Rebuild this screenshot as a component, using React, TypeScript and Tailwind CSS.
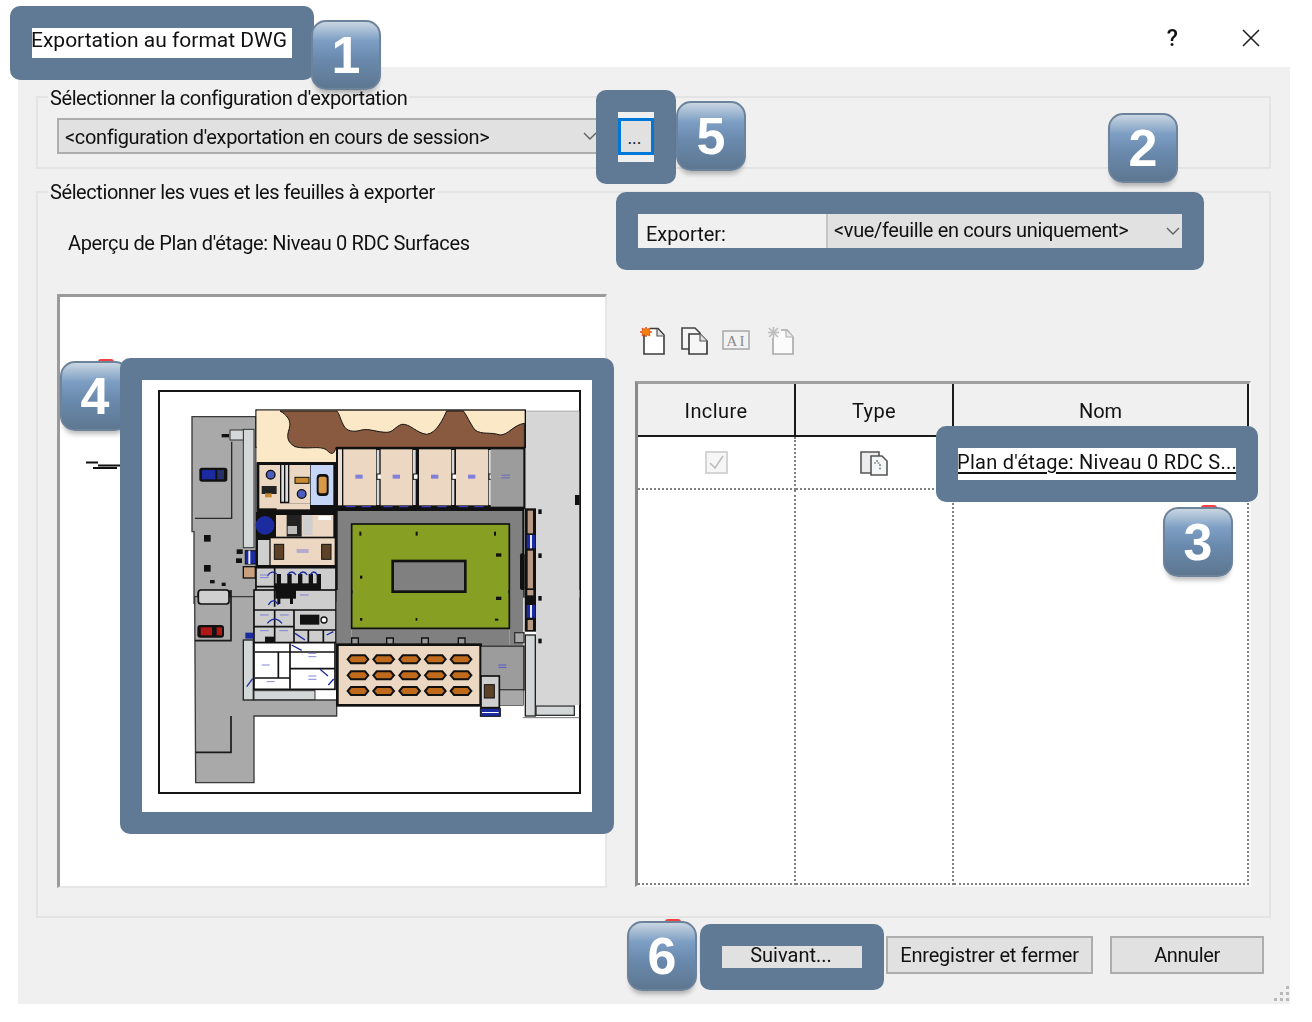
import React from "react";

const Badge = ({ n, cls, bump }: { n: string; cls: string; bump?: boolean }) => (
  <div className={`absolute w-[70px] h-[70px] ${cls}`}>
    {bump && <div className="absolute -top-[2px] left-[38px] w-[16px] h-[6px] rounded-full bg-[#f04040]" />}
    <div className="absolute inset-0 rounded-[15px] border-2 border-[#6d829b] bg-[linear-gradient(180deg,#c9d6e2_0%,#7e9fc4_28%,#6a8aae_55%,#5d7790_100%)] shadow-[0_6px_5px_-3px_rgba(0,0,0,0.28)] flex items-center justify-center text-white font-bold text-[52px] leading-none font-['Liberation_Sans',sans-serif]">
      {n}
    </div>
  </div>
);

const Ring = ({ cls }: { cls: string }) => (
  <div className={`absolute rounded-[10px] border-[22px] border-[#607a96] ${cls}`} />
);

const Chevron = () => (
  <svg width="16" height="10" viewBox="0 0 16 10" className="shrink-0">
    <path d="M2 2l6 6 6-6" fill="none" stroke="#606060" strokeWidth="1.4" />
  </svg>
);

const Txt = "blur-[0.4px] text-[#111]";

const NewIcon = () => (
  <svg width="28" height="30" viewBox="0 0 28 30">
    <path d="M5 8.5V28h20V9l-6-6.5H11" fill="#fff" stroke="#3c3c3c" strokeWidth="1.6" />
    <path d="M18 3v7h7" fill="#dfe3e6" stroke="#555" strokeWidth="1.2" />
    <path d="M5 1l1.4 2.2L9 2l-.6 2.8L11 6l-2.6 1.2L9 10 6.4 8.8 5 11 3.6 8.8 1 10l.6-2.8L-1 6l2.6-1.2L1 2l2.6 1.2z" transform="translate(2 0)" fill="#f08010" stroke="#d83000" strokeWidth="0.6" />
  </svg>
);
const CopyIcon = () => (
  <svg width="30" height="30" viewBox="0 0 30 30">
    <path d="M2 2h13l5 5v16H2z" fill="#f4f4f4" stroke="#444" strokeWidth="1.6" />
    <path d="M9 8h11l7 7v13H9z" fill="#f6f6f6" stroke="#3c3c3c" strokeWidth="1.7" />
    <path d="M20 8v7h7" fill="#dcdfe3" stroke="#555" strokeWidth="1.2" />
  </svg>
);
const RenameIcon = () => (
  <svg width="29" height="22" viewBox="0 0 29 22">
    <rect x="1" y="1" width="26" height="18" fill="#f2f2f2" stroke="#a6a6a6" strokeWidth="1.5" />
    <text x="10" y="16" fontSize="15" fontFamily="'Liberation Serif',serif" fill="#8a8a8a" textAnchor="middle">A</text>
    <text x="20" y="16" fontSize="15" fontFamily="'Liberation Serif',serif" fill="#8a8a8a" textAnchor="middle">I</text>
  </svg>
);
const DelIcon = () => (
  <svg width="28" height="30" viewBox="0 0 28 30">
    <path d="M6 12v16h20V11l-6-7h-6" fill="#fbfbfb" stroke="#a8a8a8" strokeWidth="1.6" />
    <path d="M19 4v7h7" fill="#ececec" stroke="#b0b0b0" strokeWidth="1.1" />
    <path d="M2 2l9 9M11 2l-9 9M1 6.5h11M6.5 1v11" stroke="#bdbdbd" strokeWidth="1.6" />
  </svg>
);
const SheetIcon = () => (
  <svg width="30" height="26" viewBox="0 0 30 26">
    <path d="M2 2h18v21H2z" fill="#ececec" stroke="#555" strokeWidth="1.6" />
    <path d="M12 6h11l5 5v14H12z" fill="#f4f6f8" stroke="#555" strokeWidth="1.6" />
    <path d="M15 13h6v8M18 10v3" fill="none" stroke="#666" strokeWidth="1.2" strokeDasharray="2 1.5" />
  </svg>
);

const roomsTop = [[490, 98], [602, 95], [717, 96], [828, 96]];
const tablesX = [533, 610, 688, 765, 842];
const tablesY = [208, 256, 303];

const Plan = () => (
  <svg width="450" height="432" viewBox="142 380 450 432" className="block blur-[0.4px]">
    <rect x="159" y="391" width="421" height="402" fill="#fff" stroke="#151515" strokeWidth="2" />
    <g transform="translate(180 400) scale(0.33333)">
      <polygon points="36,50 228,50 228,610 42,610 42,395 36,395" fill="#a9a9a9" stroke="#3a3a3a" strokeWidth="4" />
      <path d="M155 125V355H45" fill="none" stroke="#2a2a2a" strokeWidth="4" />
      <rect x="190" y="88" width="32" height="355" fill="#d3d7d7" stroke="#333" strokeWidth="3" />
      <rect x="150" y="90" width="40" height="30" fill="#d3d7d7" stroke="#333" strokeWidth="3" />
      <rect x="125" y="102" width="22" height="10" fill="#111" />
      <rect x="58" y="203" width="84" height="42" rx="8" fill="#111" />
      <rect x="66" y="210" width="40" height="28" fill="#1a2aa0" />
      <rect x="112" y="210" width="20" height="28" fill="#27306a" />
      <rect x="72" y="405" width="20" height="20" fill="#111" />
      <rect x="72" y="495" width="20" height="20" fill="#111" />
      <rect x="90" y="540" width="14" height="10" fill="#111" />
      <rect x="125" y="548" width="12" height="10" fill="#111" />
      <rect x="170" y="448" width="18" height="14" fill="#111" />
      <rect x="168" y="475" width="18" height="14" fill="#111" />
      <rect x="55" y="572" width="95" height="30" rx="8" fill="#d0d0d0" stroke="#111" strokeWidth="5" />
      <rect x="1036" y="33" width="162" height="560" fill="#d6d6d6" stroke="#444" strokeWidth="1" />
      <rect x="1185" y="285" width="14" height="30" fill="#111" />
      <rect x="1075" y="328" width="10" height="14" fill="#111" />
      <rect x="1075" y="460" width="10" height="14" fill="#111" />
      <rect x="228" y="30" width="808" height="112" fill="#fbe8c6" stroke="#111" strokeWidth="4" />
      <rect x="230" y="32" width="238" height="158" fill="#fbe8c6" />
      <path d="M300 33C320 45 335 60 328 85C320 110 320 125 345 140C380 150 420 135 440 150C455 165 462 165 468 142H1033V70C1000 75 985 105 960 105C930 95 905 105 885 90C870 70 860 45 850 33H800C790 55 770 100 740 103C710 100 690 70 665 73C645 80 640 97 620 97C590 97 570 85 545 90C520 97 500 95 490 75C480 55 478 40 470 33Z" fill="#8a5a40" stroke="#111" strokeWidth="3" />
      <rect x="468" y="142" width="568" height="185" fill="#111" />
      {roomsTop.map(([x, w]) => (
        <g key={x}>
          <rect x={x} y="148" width={w} height="168" fill="#ecd7c2" />
          <rect x={x + 36} y="224" width="22" height="12" fill="#8080d8" />
          <rect x={x + w + 2} y="150" width="8" height="165" fill="#d8d8d8" />
          <rect x={x + w + 3} y="222" width="14" height="16" fill="#fff" stroke="#111" strokeWidth="3" />
          <path d={`M${x + 8} 320h28M${x + 55} 320h28`} stroke="#3c3cc0" strokeWidth="4" />
        </g>
      ))}
      <rect x="474" y="148" width="12" height="168" fill="#e8ddd0" />
      <rect x="932" y="148" width="98" height="172" fill="#9c9c9c" />
      <rect x="964" y="224" width="26" height="3" fill="#6a6ab8" />
      <rect x="964" y="232" width="26" height="3" fill="#6a6ab8" />
      <rect x="230" y="186" width="238" height="150" fill="#111" />
      <rect x="238" y="195" width="62" height="130" fill="#ecd7c2" />
      <rect x="304" y="195" width="8" height="110" fill="#ddd" />
      <rect x="316" y="195" width="8" height="110" fill="#ddd" />
      <rect x="328" y="195" width="62" height="115" fill="#ecd7c2" />
      <rect x="392" y="195" width="68" height="120" fill="#c5d6f6" />
      <rect x="290" y="310" width="100" height="18" fill="#ecd7c2" />
      <rect x="410" y="222" width="36" height="66" rx="12" fill="#111" />
      <rect x="416" y="230" width="24" height="50" rx="6" fill="#d89a48" />
      <rect x="345" y="232" width="42" height="18" fill="#c88a30" stroke="#111" strokeWidth="3" />
      <circle cx="272" cy="224" r="13" fill="#4c5cc0" stroke="#111" strokeWidth="4" />
      <circle cx="365" cy="282" r="13" fill="#4c5cc0" stroke="#111" strokeWidth="4" />
      <rect x="245" y="258" width="45" height="24" fill="#222" />
      <rect x="255" y="280" width="20" height="12" fill="#c88a30" />
      <rect x="228" y="336" width="240" height="165" fill="#111" />
      <rect x="288" y="345" width="172" height="65" fill="#ecd7c2" />
      <rect x="320" y="345" width="45" height="65" fill="#222" />
      <rect x="323" y="378" width="28" height="24" fill="#bbb" />
      <rect x="368" y="345" width="30" height="60" fill="#cfcfcf" />
      <rect x="415" y="348" width="38" height="12" fill="#fff" />
      <rect x="272" y="415" width="192" height="80" fill="#ecd7c2" />
      <rect x="283" y="433" width="28" height="45" fill="#5e4228" stroke="#111" strokeWidth="3" />
      <rect x="425" y="433" width="28" height="45" fill="#5e4228" stroke="#111" strokeWidth="3" />
      <path d="M350 450h36M350 456h36" stroke="#8080d8" strokeWidth="3" />
      <rect x="234" y="420" width="34" height="75" fill="#cfcfcf" />
      <circle cx="255" cy="376" r="28" fill="#1c2ca0" />
      <rect x="196" y="452" width="32" height="40" fill="#1c2ca0" stroke="#111" strokeWidth="3" />
      <rect x="205" y="452" width="6" height="40" fill="#e8e8f8" />
      <rect x="190" y="500" width="36" height="34" fill="#c8a080" stroke="#111" strokeWidth="4" />
      <rect x="228" y="503" width="240" height="100" fill="#cdcdcd" stroke="#111" strokeWidth="5" />
      <path d="M284 503V600M228 560H284" stroke="#111" strokeWidth="5" />
      {[290, 322, 354, 386, 410].map((x) => (
        <rect key={x} x={x} y="522" width="13" height="48" fill="#111" />
      ))}
      <rect x="285" y="550" width="135" height="22" fill="#111" />
      <path d="M262 528q14-20 28-6M322 525q14-18 26 0M356 525q14-18 26 0M390 525q12-18 22 0" fill="none" stroke="#1c2ca0" strokeWidth="4" />
      <path d="M240 525h26M240 533h26" stroke="#8080d8" strokeWidth="3" />
      <rect x="470" y="330" width="560" height="260" fill="#808080" stroke="#111" strokeWidth="6" />
      <rect x="515" y="372" width="473" height="230" fill="#87a024" stroke="#111" strokeWidth="5" />
      <rect x="638" y="483" width="218" height="92" fill="#808080" stroke="#111" strokeWidth="8" />
      <rect x="538" y="395" width="6" height="12" fill="#111" />
      <rect x="707" y="395" width="6" height="12" fill="#111" />
      <rect x="942" y="395" width="6" height="12" fill="#111" />
      <rect x="948" y="460" width="16" height="10" fill="#111" />
      <rect x="540" y="527" width="7" height="9" fill="#111" />
      <rect x="1034" y="325" width="34" height="270" fill="#111" />
      <rect x="1043" y="332" width="16" height="68" fill="#b89a84" />
      <rect x="1040" y="405" width="26" height="40" fill="#1c2ca0" />
      <rect x="1050" y="405" width="6" height="40" fill="#e8e8f8" />
      <rect x="1043" y="452" width="16" height="140" fill="#b89a84" />
      <rect x="1020" y="460" width="14" height="110" rx="6" fill="#111" />
    </g>
    <g transform="translate(180 590) scale(0.33333)">
      <polygon points="44,20 222,20 222,330 470,330 470,378 222,378 222,578 47,578" fill="#a9a9a9" stroke="#3a3a3a" strokeWidth="4" />
      <path d="M153 0V152H45M153 378V487H47" fill="none" stroke="#1a1a1a" strokeWidth="5" />
      <rect x="52" y="105" width="80" height="38" rx="9" fill="#111" />
      <rect x="62" y="112" width="34" height="24" fill="#b01818" />
      <rect x="110" y="112" width="16" height="24" fill="#b01818" />
      <rect x="55" y="0" width="92" height="42" rx="8" fill="#cfcfcf" stroke="#111" strokeWidth="5" />
      <rect x="222" y="0" width="246" height="158" fill="#cdcdcd" stroke="#111" strokeWidth="5" />
      <path d="M284 0V50M222 60H468M342 60V158M284 60V155M222 110H342M342 120H468M385 120V158M430 120V158" fill="none" stroke="#111" strokeWidth="5" />
      <rect x="286" y="0" width="62" height="26" fill="#111" />
      <rect x="292" y="24" width="9" height="18" fill="#111" />
      <rect x="330" y="24" width="9" height="18" fill="#111" />
      <rect x="360" y="74" width="58" height="30" fill="#111" />
      <circle cx="432" cy="90" r="9" fill="#fff" stroke="#111" strokeWidth="4" />
      <rect x="255" y="140" width="30" height="16" fill="#111" />
      <path d="M265 45q15-25 30 0M262 100q22-25 44 0M345 130l30 20M440 135l20-10" fill="none" stroke="#1c2ca0" strokeWidth="4" />
      <path d="M240 75h26M300 75h26M240 122h26M298 122h26M360 15h26" stroke="#8080d8" strokeWidth="3" />
      <rect x="196" y="128" width="24" height="18" fill="#1c2ca0" />
      <rect x="190" y="150" width="30" height="180" fill="#d3d7d7" stroke="#222" strokeWidth="4" />
      <rect x="222" y="302" width="183" height="27" fill="#d3d7d7" stroke="#333" strokeWidth="3" />
      <rect x="222" y="158" width="243" height="140" fill="#fff" stroke="#111" strokeWidth="5" />
      <path d="M225 186H330M330 160V296M225 264H330M330 236H465M295 188V264M330 186H465" fill="none" stroke="#111" strokeWidth="5" />
      <path d="M385 190h24M385 200h24M385 258h24M385 268h24M245 225h24M260 275h24" stroke="#8888d8" strokeWidth="3" />
      <path d="M200 290l18-24M335 165l30 16M420 238l24 20M445 285l16-18" fill="none" stroke="#1c2ca0" strokeWidth="4" />
      <rect x="470" y="0" width="45" height="165" fill="#808080" />
      <rect x="988" y="0" width="42" height="165" fill="#808080" />
      <rect x="515" y="115" width="473" height="50" fill="#808080" />
      <rect x="515" y="10" width="473" height="105" fill="#87a024" />
      <path d="M515 0V115H988V0" fill="none" stroke="#111" strokeWidth="5" />
      <rect x="540" y="84" width="7" height="8" fill="#111" />
      <rect x="707" y="84" width="5" height="8" fill="#111" />
      <rect x="945" y="86" width="10" height="6" fill="#111" />
      <rect x="948" y="20" width="16" height="10" fill="#111" />
      {[515, 620, 725, 835].map((x) => (
        <path key={x} d={`M${x} 165V144h20v21`} fill="#999" stroke="#111" strokeWidth="4" />
      ))}
      <rect x="472" y="164" width="430" height="182" fill="#ecd7c2" stroke="#111" strokeWidth="8" />
      {tablesY.map((y) =>
        tablesX.map((x) => (
          <polygon key={`${x}-${y}`} points={`${x - 30},${y} ${x - 20},${y - 12} ${x + 22},${y - 12} ${x + 32},${y} ${x + 22},${y + 12} ${x - 20},${y + 12}`} fill="#c06a1c" stroke="#111" strokeWidth="6" />
        ))
      )}
      <rect x="902" y="168" width="130" height="132" fill="#9c9c9c" stroke="#111" strokeWidth="4" />
      <path d="M955 225h24M955 232h24" stroke="#5a5ac8" strokeWidth="3" />
      <rect x="958" y="300" width="72" height="46" fill="#a8a8a8" stroke="#333" strokeWidth="2" />
      <rect x="903" y="258" width="55" height="95" fill="#cfcfcf" stroke="#111" strokeWidth="5" />
      <rect x="913" y="284" width="30" height="40" fill="#5e4228" stroke="#111" strokeWidth="3" />
      <rect x="901" y="355" width="60" height="24" fill="#1c2ca0" stroke="#111" strokeWidth="3" />
      <rect x="906" y="366" width="50" height="3" fill="#fff" />
      <rect x="1034" y="-5" width="34" height="130" fill="#111" />
      <rect x="1042" y="0" width="18" height="16" fill="#b89a84" />
      <rect x="1040" y="45" width="26" height="38" fill="#1c2ca0" />
      <rect x="1050" y="45" width="6" height="38" fill="#e8e8f8" />
      <rect x="1043" y="90" width="16" height="30" fill="#b89a84" />
      <rect x="1068" y="0" width="130" height="345" fill="#d6d6d6" />
      <rect x="1075" y="18" width="10" height="14" fill="#111" />
      <rect x="1075" y="146" width="10" height="14" fill="#111" />
      <rect x="1004" y="128" width="28" height="30" fill="#a8a8a8" stroke="#333" strokeWidth="4" />
      <rect x="1036" y="135" width="30" height="243" fill="#d3d7d7" stroke="#222" strokeWidth="4" />
      <rect x="1068" y="348" width="115" height="28" fill="#d3d7d7" stroke="#333" strokeWidth="4" />
      <path d="M1028 383H1198" stroke="#777" strokeWidth="3" />
    </g>
  </svg>
);

export default function App() {
  return (
    <div className="relative w-[1312px] h-[1022px] bg-white overflow-hidden font-['Roboto',sans-serif] text-[20px] leading-[24px]">
      {/* title bar */}
      <div className="h-[67px] flex items-start">
        <div className={`ml-[31px] mt-[28px] text-[21px] leading-[24px] ${Txt}`}>Exportation au format DWG</div>
        <div className={`ml-auto mt-[27px] text-[23px] leading-[24px] font-medium ${Txt}`}>?</div>
        <svg width="20" height="20" viewBox="0 0 20 20" className="ml-[63px] mr-[51px] mt-[28px]">
          <path d="M2 2l16 16M18 2L2 18" stroke="#222" strokeWidth="1.6" />
        </svg>
      </div>

      {/* dialog body */}
      <div className="relative ml-[18px] w-[1272px] h-[937px] bg-[#f0f0f0] px-[18px] pt-[18px]">
        <fieldset className="w-[1235px] h-[84px] border-2 border-[#e4e4e4]">
          <legend className={`ml-[10px] px-[2px] h-[24px] leading-[26px] tracking-[-0.42px] ${Txt}`}>Sélectionner la configuration d'exportation</legend>
          <div className="flex mt-[9px] ml-[19px]">
            <div className="w-[543px] h-[36px] bg-[#e1e1e1] border-2 border-[#adadad] flex items-center justify-between pl-[6px]">
              <span className={`mt-[2px] tracking-[-0.36px] ${Txt}`}>&lt;configuration d'exportation en cours de session&gt;</span>
              <Chevron />
            </div>
            <div className="ml-[18px] w-[36px] h-[37px] bg-[#e1e1e1] border-[3px] border-[#0078d7] flex items-center justify-center">
              <span className="text-[18px] leading-[20px] text-[#223] mt-[2px] -ml-[3px]">...</span>
            </div>
          </div>
        </fieldset>

        <fieldset className="mt-[11px] w-[1235px] h-[738px] border-2 border-[#e4e4e4]">
          <legend className={`ml-[10px] px-[2px] h-[24px] tracking-[-0.42px] ${Txt}`}>Sélectionner les vues et les feuilles à exporter</legend>
          <div className="flex">
            <div className="ml-[19px] w-[550px]">
              <div className={`mt-[27px] ml-[11px] h-[24px] tracking-[-0.36px] ${Txt}`}>Aperçu de Plan d'étage: Niveau 0 RDC Surfaces</div>
              <div className="relative mt-[39px] h-[594px] bg-white border-t-[3px] border-l-[3px] border-t-[#9a9a9a] border-l-[#9a9a9a] border-r-2 border-b-2 border-r-[#e6e6e6] border-b-[#e6e6e6]">
                <svg width="36" height="10" viewBox="0 0 36 10" className="absolute left-[25px] top-[163px] blur-[0.3px]">
                  <path d="M1 2.5h12M13 5.5h22M8 8h24" stroke="#111" strokeWidth="2" fill="none" />
                </svg>
              </div>
            </div>
            <div className="ml-[28px] w-[615px]">
              <div className="ml-[3px] mt-[10px] h-[34px] w-[544px] flex">
                <div className={`w-[188px] pl-[8px] pt-[8px] ${Txt}`}>Exporter:</div>
                <div className="flex-1 bg-[#e1e1e1] border-l-2 border-l-[#c4c4c4] flex items-center justify-between pl-[6px] pr-[1px]">
                  <span className={`-mt-[2px] tracking-[-0.35px] ${Txt}`}>&lt;vue/feuille en cours uniquement&gt;</span>
                  <Chevron />
                </div>
              </div>
              <div className="mt-[78px] h-[30px] flex items-center pl-[4px]">
                <NewIcon />
                <div className="ml-[13px]"><CopyIcon /></div>
                <div className="ml-[12px]"><RenameIcon /></div>
                <div className="ml-[16px]"><DelIcon /></div>
              </div>
              <div className="mt-[25px] w-[616px] h-[506px] bg-white border-t-[3px] border-l-[3px] border-r-2 border-b-2 border-t-[#a0a0a0] border-l-[#8a8a8a] border-r-[#f8f8f8] border-b-[#fafafa] grid grid-cols-[158px_158px_1fr] grid-rows-[53px_53px_1fr]">
                <div className={`bg-[#f0f0f0] border-r-2 border-b-2 border-[#1a1a1a] flex items-center justify-center pt-[2px] tracking-[0.4px] ${Txt}`}>Inclure</div>
                <div className={`bg-[#f0f0f0] border-r-2 border-b-2 border-[#1a1a1a] flex items-center justify-center pt-[2px] tracking-[0.4px] ${Txt}`}>Type</div>
                <div className={`bg-[#f0f0f0] border-r-2 border-b-2 border-[#1a1a1a] flex items-center justify-center pt-[2px] ${Txt}`}>Nom</div>
                <div className="border-r-2 border-b-2 border-dotted border-[#808080] flex items-center justify-center">
                  <div className="w-[23px] h-[23px] border-2 border-[#d4d4d4] bg-[#f6f6f6] flex items-center justify-center">
                    <svg width="17" height="17" viewBox="0 0 17 17"><path d="M2 9l5 5 8-12" fill="none" stroke="#bdbdbd" strokeWidth="1.6" /></svg>
                  </div>
                </div>
                <div className="border-r-2 border-b-2 border-dotted border-[#808080] flex items-center justify-center"><SheetIcon /></div>
                <div className="border-r-2 border-b-2 border-dotted border-[#808080] pl-[3px] pt-[13px]">
                  <span className={`underline underline-offset-[3px] decoration-2 whitespace-nowrap tracking-[0.27px] ${Txt}`}>Plan d'étage: Niveau 0 RDC S...</span>
                </div>
                <div className="border-r-2 border-b-2 border-dotted border-[#808080]" />
                <div className="border-r-2 border-b-2 border-dotted border-[#808080]" />
                <div className="border-r-2 border-b-2 border-dotted border-[#808080]" />
              </div>
            </div>
          </div>
        </fieldset>

        <div className="mt-[18px] flex justify-end gap-[17px] pr-[8px]">
          <div className="flex">
            <div className={`w-[184px] h-[38px] bg-[#e1e1e1] flex items-center justify-center -translate-x-[1px] ${Txt}`}>Suivant...</div>
            <div className={`ml-[2px] w-[207px] h-[38px] bg-[#e1e1e1] border-2 border-[#adadad] flex items-center justify-center tracking-[-0.2px] ${Txt}`}>Enregistrer et fermer</div>
          </div>
          <div className={`w-[154px] h-[38px] bg-[#e1e1e1] border-2 border-[#adadad] flex items-center justify-center tracking-[-0.4px] ${Txt}`}>Annuler</div>
        </div>

        <svg width="16" height="16" viewBox="0 0 16 16" className="absolute right-0 bottom-[2px]">
          <g fill="#b8b8b8">
            <rect x="12" y="0" width="3" height="3" /><rect x="12" y="6" width="3" height="3" /><rect x="12" y="12" width="3" height="3" />
            <rect x="6" y="6" width="3" height="3" /><rect x="6" y="12" width="3" height="3" /><rect x="0" y="12" width="3" height="3" />
          </g>
        </svg>
      </div>

      {/* annotation overlays */}
      <Ring cls="left-[10px] top-[6px] w-[304px] h-[74px]" />
      <Badge n="1" cls="left-[311px] top-[20px]" />
      <Ring cls="left-[596px] top-[90px] w-[80px] h-[94px]" />
      <Badge n="5" cls="left-[676px] top-[101px]" />
      <Ring cls="left-[616px] top-[192px] w-[588px] h-[78px]" />
      <Badge n="2" cls="left-[1108px] top-[113px]" />
      <Ring cls="left-[936px] top-[426px] w-[322px] h-[76px]" />
      <Badge n="3" cls="left-[1163px] top-[507px]" bump />
      <Badge n="4" cls="left-[60px] top-[361px]" bump />
      <div className="absolute left-[120px] top-[358px] w-[494px] h-[476px] rounded-[10px] border-[22px] border-[#607a96] bg-white">
        <Plan />
      </div>
      <Ring cls="left-[700px] top-[924px] w-[184px] h-[66px]" />
      <Badge n="6" cls="left-[627px] top-[921px]" bump />
    </div>
  );
}
